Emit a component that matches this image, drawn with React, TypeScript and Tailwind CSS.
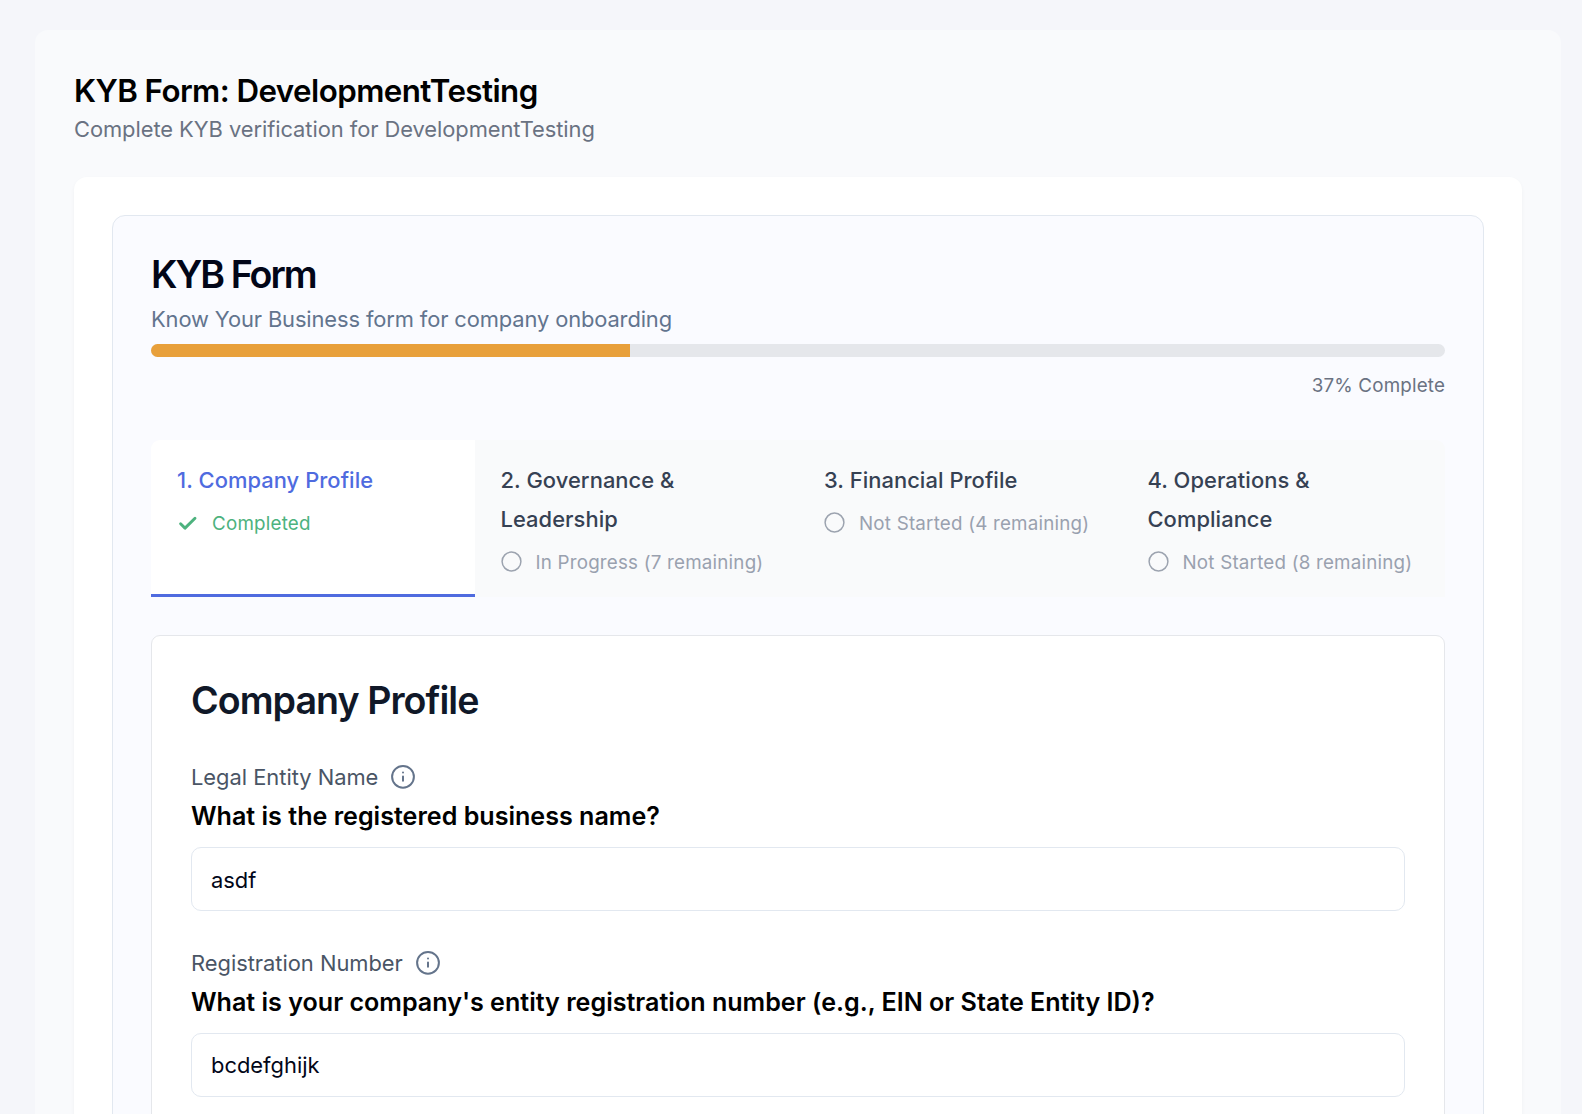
import React from 'react';

type Status = 'done' | 'open';

const sections: { title: string; status: Status; note: string }[] = [
  { title: '1. Company Profile', status: 'done', note: 'Completed' },
  { title: '2. Governance & Leadership', status: 'open', note: 'In Progress (7 remaining)' },
  { title: '3. Financial Profile', status: 'open', note: 'Not Started (4 remaining)' },
  { title: '4. Operations & Compliance', status: 'open', note: 'Not Started (8 remaining)' },
];

function CheckIcon() {
  return (
    <svg className="h-[21px] w-[21px] shrink-0" viewBox="0 0 21 21" fill="none" stroke="#4db27e" strokeWidth="2.9" strokeLinecap="round" strokeLinejoin="round">
      <path d="M3.6 10.8 8 15.1 18 5.2" />
    </svg>
  );
}

function CircleIcon() {
  return (
    <svg className="mb-px h-[21px] w-[21px] shrink-0" viewBox="0 0 21 21" fill="none" stroke="#9ca3af" strokeWidth="1.5">
      <circle cx="10.5" cy="10.5" r="9.4" />
    </svg>
  );
}

function InfoIcon() {
  return (
    <svg className="h-[26px] w-[26px] shrink-0" viewBox="0 0 26 26" fill="none" stroke="#64748b" strokeWidth="2" strokeLinecap="round">
      <circle cx="13" cy="12.8" r="10.9" />
      <path d="M13 12.4v4.4M13 8.5h.01" />
    </svg>
  );
}

function Field({ label, question, value, className }: { label: string; question: string; value: string; className: string }) {
  return (
    <div className={className}>
      <div className="flex h-9 items-center gap-[12px]">
        <span className="text-[21.9px] leading-9 tracking-[-0.02px] text-gray-600">{label}</span>
        <InfoIcon />
      </div>
      <div className="pt-px text-[25.1px] leading-[41px] font-semibold text-black">{question}</div>
      <input
        className="mt-[10px] block h-16 w-full rounded-[10px] border border-slate-200 bg-white px-[19px] pt-px text-[21.9px] text-slate-950 outline-none"
        defaultValue={value}
      />
    </div>
  );
}

export default function App() {
  return (
    <div className="h-[1114px] overflow-hidden bg-[#f5f6fa] pt-[30px] pr-[21px] pl-[35px] font-['Inter',sans-serif]">
      <main className="h-[1200px] rounded-[13px] bg-[#f9fafc] px-[39px] pt-[40px]">
        <h1 className="text-[31.3px] leading-[42px] font-semibold tracking-[-0.56px] text-black">KYB Form: DevelopmentTesting</h1>
        <p className="-mt-px text-[21.9px] leading-9 tracking-[-0.06px] text-gray-500">Complete KYB verification for DevelopmentTesting</p>

        <div className="mt-[30px] h-[1100px] rounded-[13px] bg-white px-[38px] pt-[38px] shadow-[0_2px_4px_rgba(0,0,0,0.04)]">
          <div className="h-[1000px] rounded-[13px] border border-slate-200 bg-[#fafbff] p-[38px]">
            <h2 className="pt-px text-[37.6px] leading-10 font-semibold tracking-[-1.95px] text-slate-950">KYB Form</h2>
            <p className="mt-[6px] text-[21.9px] leading-9 tracking-[-0.12px] text-slate-500">Know Your Business form for company onboarding</p>
            <div className="mt-[7px] h-[13px] overflow-hidden rounded-full bg-gray-200">
              <div className="h-full w-[37%] bg-[#e8a03b]" />
            </div>
            <div className="mt-[15px] text-right text-[18.8px] leading-7 tracking-[0.16px] text-gray-500">37% Complete</div>

            <nav className="mt-[40px] grid h-[157px] grid-cols-4 overflow-hidden rounded-t-[9px] bg-[#f9fafb]">
              {sections.map((s) => (
                <div
                  key={s.title}
                  className={
                    s.status === 'done'
                      ? 'border-b-[3px] border-[#4f6bdf] bg-white px-[26px] pt-[21px]'
                      : 'px-[26px] pt-[21px]'
                  }
                >
                  <div className={s.status === 'done' ? 'w-[220px] text-[21.9px] leading-[39px] font-medium tracking-[0.06px] text-[#4f6bdf]' : 'w-[220px] text-[21.9px] leading-[39px] font-medium tracking-[0.06px] text-gray-700'}>
                    {s.title}
                  </div>
                  <div className="mt-[5px] flex h-9 items-center gap-[14px]">
                    {s.status === 'done' ? <CheckIcon /> : <CircleIcon />}
                    <span className={s.status === 'done' ? 'pt-[2px] text-[18.8px] tracking-[0.2px] whitespace-nowrap text-[#4db27e]' : 'pt-[2px] text-[18.8px] tracking-[0.2px] whitespace-nowrap text-gray-400'}>
                      {s.note}
                    </span>
                  </div>
                </div>
              ))}
            </nav>

            <section className="mt-[38px] h-[600px] rounded-[9px] border border-gray-200 bg-white px-[39px] pt-[42px]">
              <h3 className="text-[37.6px] leading-[45px] font-semibold tracking-[-0.95px] text-gray-900">Company Profile</h3>
              <Field className="mt-[36px]" label="Legal Entity Name" question="What is the registered business name?" value="asdf" />
              <Field
                className="mt-[33.5px]"
                label="Registration Number"
                question="What is your company's entity registration number (e.g., EIN or State Entity ID)?"
                value="bcdefghijk"
              />
            </section>
          </div>
        </div>
      </main>
    </div>
  );
}
